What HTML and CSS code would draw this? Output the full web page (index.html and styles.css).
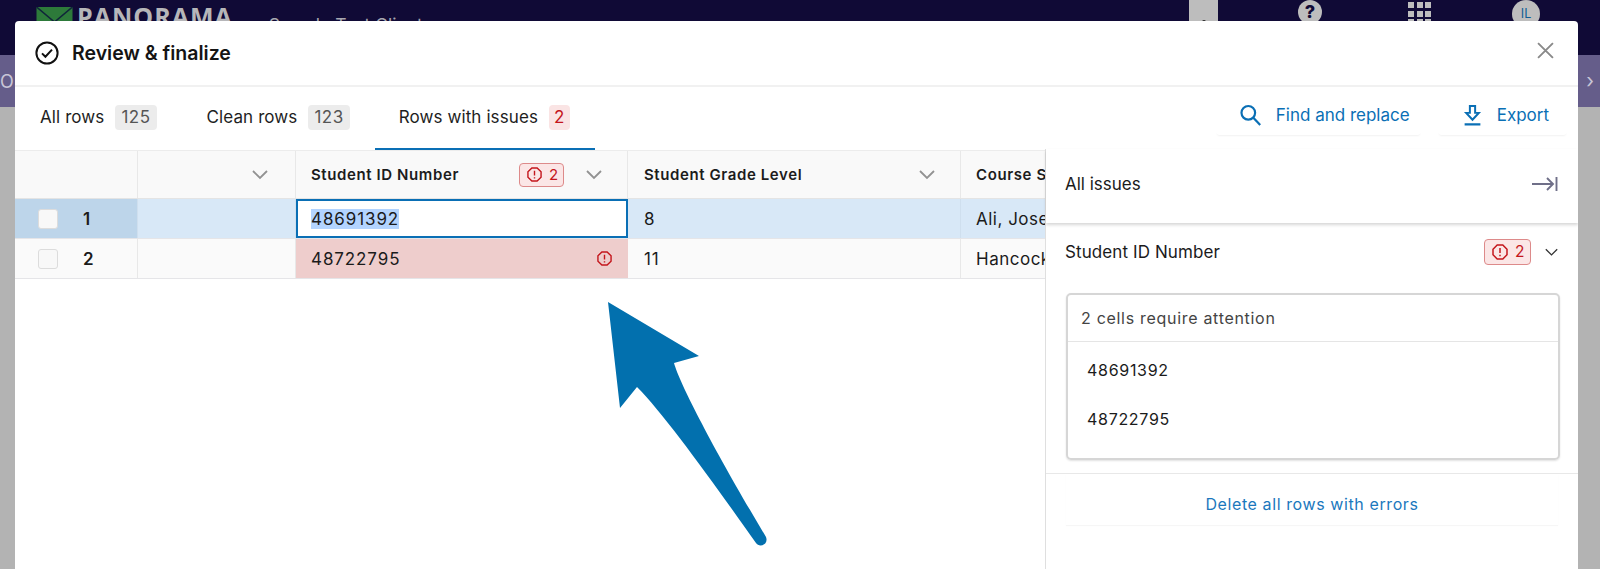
FILE: index.html
```html
<!DOCTYPE html>
<html lang="en">
<head>
<meta charset="utf-8">
<title>Review &amp; finalize</title>
<link rel="stylesheet" href="styles.css">
</head>
<body>
<header class="topbar">
  <div class="brand">
    <svg class="brand-mark" viewBox="0 0 36 24" aria-hidden="true"><rect width="36" height="24" fill="#2d7a3a"/><path d="M0 0l18 15L36 0" fill="none" stroke="#10263a" stroke-width="1.6"/></svg>
    <span class="brand-name">PANORAMA</span>
    <span class="client">Sample Test Client</span>
  </div>
  <div class="top-actions">
    <div class="top-tab"><span class="top-dot"></span></div>
    <span class="help">?</span>
    <div class="apps"><i></i><i></i><i></i><i></i><i></i><i></i><i></i><i></i><i></i></div>
    <span class="avatar">IL</span>
  </div>
</header>
<div class="subbar"><span class="sub-o">O</span><span class="sub-next">›</span></div>

<main class="modal">
  <div class="modal-head">
    <svg class="check" viewBox="0 0 24 24" aria-hidden="true"><circle cx="12" cy="12" r="10.6" fill="none" stroke="#111" stroke-width="2"/><path d="M7 12.4l3.4 3.4L17 8.6" fill="none" stroke="#111" stroke-width="2"/></svg>
    <h1>Review &amp; finalize</h1>
    <svg class="close" viewBox="0 0 16 16" aria-hidden="true"><path d="M1 1l14 14M15 1L1 15" stroke="#8a8a8a" stroke-width="1.8" fill="none"/></svg>
  </div>

  <div class="toolbar">
    <nav class="tabs">
      <div class="tab">All rows <span class="count">125</span></div>
      <div class="tab">Clean rows <span class="count">123</span></div>
      <div class="tab active">Rows with issues <span class="count danger">2</span></div>
    </nav>
    <div class="actions">
      <div class="action find">
        <svg viewBox="0 0 20 20" aria-hidden="true"><circle cx="8" cy="8" r="6.2" fill="none" stroke="#0a6fb5" stroke-width="2"/><path d="M12.6 12.6l6.2 6.6" stroke="#0a6fb5" stroke-width="2" fill="none"/></svg>
        Find and replace
      </div>
      <div class="action export">
        <svg viewBox="0 0 18 20" aria-hidden="true"><path d="M6.5 1h5v6.5h3.500L9 14 3 7.500h3.500z" fill="none" stroke="#0a6fb5" stroke-width="1.900"/><path d="M1.500 18.500h15" stroke="#0a6fb5" stroke-width="2.200"/></svg>
        Export
      </div>
    </div>
  </div>

  <div class="work">
    <section class="grid">
      <div class="row head">
        <div class="cell c-index"></div>
        <div class="cell c-blank"><svg class="chev" viewBox="0 0 16 10"><path d="M1 1l7 7 7-7"/></svg></div>
        <div class="cell c-id"><b>Student ID Number</b><span class="badge"><svg class="err" viewBox="0 0 16 16"><path d="M5.200 1h5.600L15 5.200v5.600L10.800 15H5.200L1 10.800V5.200z"/><path d="M8 4v5M8 10.800v1.400"/></svg>2</span><svg class="chev" viewBox="0 0 16 10"><path d="M1 1l7 7 7-7"/></svg></div>
        <div class="cell c-grade"><b>Student Grade Level</b><svg class="chev" viewBox="0 0 16 10"><path d="M1 1l7 7 7-7"/></svg></div>
        <div class="cell c-course"><b>Course Section</b></div>
      </div>
      <div class="row selected">
        <div class="cell c-index"><span class="box"></span><b>1</b></div>
        <div class="cell c-blank"></div>
        <div class="cell c-id editing"><span class="sel">48691392</span></div>
        <div class="cell c-grade">8</div>
        <div class="cell c-course">Ali, Joseph</div>
      </div>
      <div class="row plain">
        <div class="cell c-index"><span class="box"></span><b>2</b></div>
        <div class="cell c-blank"></div>
        <div class="cell c-id invalid">48722795<svg class="err" viewBox="0 0 16 16"><path d="M5.200 1h5.600L15 5.200v5.600L10.800 15H5.200L1 10.800V5.200z"/><path d="M8 4v5M8 10.800v1.400"/></svg></div>
        <div class="cell c-grade">11</div>
        <div class="cell c-course">Hancock, Jo</div>
      </div>
    </section>

    <aside class="issues">
      <div class="issues-head">All issues
        <svg viewBox="0 0 26 16" aria-hidden="true"><path d="M0 8h21M15 2l6 6-6 6M24.500 1v14" fill="none" stroke="#6f6f88" stroke-width="1.900"/></svg>
      </div>
      <div class="issue-title">Student ID Number
        <span class="badge"><svg class="err" viewBox="0 0 16 16"><path d="M5.200 1h5.600L15 5.200v5.600L10.800 15H5.200L1 10.800V5.200z"/><path d="M8 4v5M8 10.800v1.400"/></svg>2</span>
        <svg class="chev dark" viewBox="0 0 16 10"><path d="M1 1l7 7 7-7"/></svg>
      </div>
      <div class="issue-card">
        <div class="card-head">2 cells require attention</div>
        <div class="card-item first">48691392</div>
        <div class="card-item">48722795</div>
      </div>
      <div class="delete"><span>Delete all rows with errors</span></div>
    </aside>
  </div>
</main>

<svg class="arrow" viewBox="0 0 1600 569" aria-hidden="true"><path d="M608 302L699 356L674 363C680 385 720 460 766 537C769 545 759 548 756 543C715 485 665 415 637 387L620 408Z" fill="#0270ae"/></svg>
</body>
</html>
```
FILE: styles.css
```css
* { box-sizing: border-box; }
html, body { margin: 0; height: 569px; overflow: hidden; }
body { position: relative; background: #b3b3b3; font-family: Inter, "Liberation Sans", sans-serif; color: #1b1b1b; font-size: 16px; }

.topbar { height: 55px; background: #100a36; display: flex; justify-content: space-between; padding-left: 36px; overflow: hidden; }
.brand { display: flex; align-items: flex-start; }
.brand-mark { width: 37px; height: 24px; margin-top: 7px; }
.brand-name { color: #b6b6b9; font-size: 25px; font-weight: 700; line-height: 30px; letter-spacing: 1px; margin: 1px 0 0 4px; font-family: "Open Sans", sans-serif; }
.client { color: #a8a8b0; font-size: 17.500px; margin: 14px 0 0 36px; }
.top-actions { display: flex; align-items: flex-start; padding-right: 60px; }
.top-tab { width: 29px; height: 30px; background: #bdbdbd; display: flex; justify-content: center; padding-top: 20px; }
.top-dot { width: 4px; height: 4px; border-radius: 50%; background: #222; }
.help { width: 24px; height: 24px; border-radius: 50%; background: #bdbdbd; color: #100a36; font-weight: 800; font-size: 18px; line-height: 24px; text-align: center; margin-left: 80px; }
.apps { display: grid; grid-template-columns: repeat(3, 6px); gap: 2.500px; margin: 2px 0 0 86px; }
.apps i { display: block; width: 6px; height: 6px; background: #bdbdbd; }
.avatar { width: 28px; height: 28px; border-radius: 50%; background: #bdbdbd; color: #0e5d96; font-size: 12.500px; line-height: 28px; text-align: center; margin-left: 81px; }

.subbar { height: 52px; background: #655d8a; display: flex; justify-content: space-between; align-items: center; color: #c9c6d6; }
.sub-o { font-size: 18px; }
.sub-next { font-size: 20px; margin-right: 6px; }

.modal { position: absolute; left: 15px; top: 21px; width: 1563px; height: 548px; background: #fff; border-radius: 4px 4px 0 0; overflow: hidden; }

.modal-head { height: 66px; display: flex; align-items: center; padding: 0 24px 0 20px; border-bottom: 2px solid #f1f1f1; }
.check { width: 24px; height: 24px; margin-right: 13px; }
.modal-head h1 { margin: 0; font-size: 19.500px; font-weight: 600; flex: 1; color: #141414; }
.close { width: 17px; height: 17px; margin-bottom: 5px; }

.toolbar { height: 64px; display: flex; justify-content: space-between; border-bottom: 1px solid #ececec; }
.tabs { display: flex; }
.tab { display: flex; align-items: center; gap: 11px; height: 63px; padding: 0 25px 3px; font-size: 17px; letter-spacing: .1px; color: #1e1e1e; }
.tab.active { border-bottom: 2px solid #0a6fb5; padding: 0 25px 1px 24px; }
.count { background: #ececec; color: #555; border-radius: 4px; padding: 0 6px; font-size: 17px; line-height: 25px; letter-spacing: .5px; }
.count.danger { background: #fae4e4; color: #c4161c; padding: 0 5px; }

.actions { display: flex; align-items: flex-start; padding: 8px 11px 0 0; gap: 17px; }
.action { display: flex; align-items: center; height: 40px; color: #0a6fb5; font-size: 17px; border-radius: 4px; box-shadow: 0 2px 2px -1px #f2f2f2; white-space: nowrap; }
.find { padding: 0 11px 0 23px; }
.export { padding: 0 18px 0 25px; }
.find svg { width: 23px; height: 22px; margin-right: 14px; }
.export svg { width: 19px; height: 21px; margin-right: 15px; }

.work { position: relative; height: 418px; }
.grid { font-size: 17px; }
.row { display: flex; height: 40px; border-bottom: 1px solid #e5e5e8; }
.row.head { height: 48px; background: #f9f9f9; color: #1c1c1c; border-bottom: 1px solid #e4e4e4; }
.cell { display: flex; align-items: center; padding: 0 15px; border-right: 1px solid #e8e8e8; flex: none; letter-spacing: .9px; }
.cell b { font-weight: 600; font-size: 15px; letter-spacing: .6px; }
.c-index { width: 123px; padding: 0 0 0 23px; gap: 25px; }
.c-index b { font-size: 17px; letter-spacing: 0; }
.c-blank { width: 158px; justify-content: flex-end; padding-right: 27px; }
.c-id { width: 332px; }
.c-grade { width: 333px; padding-left: 16px; }
.c-course { width: 84px; border-right: 0; white-space: nowrap; overflow: hidden; letter-spacing: .5px; padding-right: 0; }
.c-grade .chev { margin-left: auto; margin-right: 10px; }
.c-id .chev { margin-left: 22px; margin-right: 10px; }

.chev { width: 16px; height: 10px; }
.chev path { fill: none; stroke: #929292; stroke-width: 1.800; }
.chev.dark { width: 13px; height: 9px; }
.chev.dark path { stroke: #333; stroke-width: 1.600; }

.badge { display: inline-flex; align-items: center; gap: 7px; height: 24px; width: 45px; padding: 0 0 0 7px; margin-left: auto; border: 1px solid #dd8a8a; border-radius: 4px; background: #fbe6e6; color: #c4161c; font-size: 15px; line-height: 1; letter-spacing: 0; }
.err { width: 15px; height: 15px; flex: none; }
.err path { fill: none; stroke: #c4161c; stroke-width: 1.500; }

.box { width: 20px; height: 20px; border: 1px solid #dcdcdc; border-radius: 3px; background: #f8f8f8; flex: none; }
.selected { background: #d8e8f7; }
.selected .c-index { background: #bdd5ea; }
.selected .cell { border-right-color: #cfdfee; }
.plain { background: #fafafa; }
.selected .editing { background: #fff; border: 2px solid #0a6fb5; padding-left: 13px; }
.sel { background: #b3d4ff; line-height: 20px; }
.invalid { background: #eecdcc; justify-content: space-between; padding-right: 16px; border-right: 0; }

.issues { position: absolute; right: 0; top: -2px; width: 533px; height: 420px; background: #fff; border-left: 1px solid #dfdfdf; font-size: 17px; }
.issues-head { height: 74px; display: flex; justify-content: space-between; align-items: center; padding: 0 20px 5px 19px; box-shadow: 0 2px 3px rgba(0,0,0,.16); }
.issues-head svg { width: 26px; height: 16px; }
.issue-title { display: flex; align-items: center; height: 58px; padding: 0 20px 0 19px; letter-spacing: .1px; }
.issue-title .badge { margin-right: 14px; height: 26px; width: 47px; font-size: 15.500px; }
.issue-title .err { width: 16px; height: 16px; }
.issue-card { margin: 12px 18px 0 20px; height: 167px; border: 2px solid #d6d6d6; border-radius: 5px; box-shadow: 0 1px 2px rgba(0,0,0,.12); font-size: 16px; letter-spacing: .7px; }
.card-head { height: 47px; display: flex; align-items: center; padding-left: 13px; color: #444; border-bottom: 1px solid #e5e5e5; }
.card-item { height: 49px; display: flex; align-items: center; padding-left: 19px; }
.card-item.first { margin-top: 3px; }
.delete { margin-top: 13px; border-top: 1px solid #e8e8e8; padding: 0 20px; font-size: 16px; }
.delete span { display: flex; height: 51px; padding-top: 9px; align-items: center; justify-content: center; color: #1b78bd; letter-spacing: .6px; box-shadow: 0 1px 1px #f6f6f6; }

.arrow { position: absolute; left: 0; top: 0; width: 1600px; height: 569px; pointer-events: none; }
```
